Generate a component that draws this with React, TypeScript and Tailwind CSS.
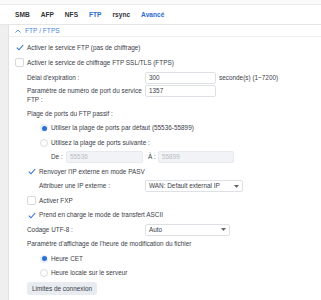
import React from "react";

const font = { fontFamily: '"Liberation Sans", Arial, sans-serif' };

function Check({ checked }: { checked: boolean }) {
  return (
    <span
      className={
        "w-[9px] h-[9px] rounded-[2px] flex items-center justify-center shrink-0 " +
        (checked ? "" : "border border-[#d5d9df] bg-white")
      }
    >
      {checked && (
        <svg width="8" height="7" viewBox="0 0 8 7">
          <path d="M0.8 3.6 L3 5.8 L7.2 1" fill="none" stroke="#2f6fd3" strokeWidth="1.1" />
        </svg>
      )}
    </span>
  );
}

function Radio({ on }: { on: boolean }) {
  return on ? (
    <span className="w-[8px] h-[8px] rounded-full bg-[#e6eefa] flex items-center justify-center shrink-0">
      <span className="w-[5px] h-[5px] rounded-full bg-[#2f6fd3]" />
    </span>
  ) : (
    <span className="w-[8px] h-[8px] rounded-full border border-[#d8dce2] bg-white shrink-0" />
  );
}

function Caret() {
  return (
    <svg width="5" height="3" viewBox="0 0 5 3">
      <path d="M0 0 L5 0 L2.5 3 Z" fill="#666" />
    </svg>
  );
}

export default function App() {
  const tabs = ["SMB", "AFP", "NFS", "FTP", "rsync", "Avancé"];
  return (
    <div className="w-[321px] h-[300px] bg-white overflow-hidden text-[6.4px] text-[#3b4048]" style={font}>
      <div className="h-[5px] bg-[#fafafa] border-b border-[#ebebeb]" />
      <div className="h-[20px] flex items-center gap-[11px] pl-[15px] border-b border-[#e6e6e6] font-bold text-[6.6px]">
        {tabs.map((t) => (
          <span key={t} className={t === "FTP" || t === "Avancé" ? "text-[#2a6bd0]" : "text-[#333]"}>
            {t}
          </span>
        ))}
      </div>
      <div className="flex h-[275px]">
        <div className="w-[9px] bg-[#efefef] border-r border-[#e2e2e2]" />
        <div className="flex-1 flex flex-col">
          <div className="h-[12px] flex items-center gap-[4px] pl-[6px] border-b border-[#efefef] text-[#4a84d6] text-[6.6px]">
            <svg width="6" height="4" viewBox="0 0 6 4">
              <path d="M0.5 3.5 L3 1 L5.5 3.5" fill="none" stroke="#4a84d6" strokeWidth="0.9" />
            </svg>
            <span>FTP / FTPS</span>
          </div>
          <div className="pt-[3px] pl-[6px] flex flex-col">
            <div className="h-[15px] flex items-center gap-[3px]">
              <Check checked />
              <span>Activer le service FTP (pas de chiffrage)</span>
            </div>
            <div className="h-[15px] flex items-center gap-[3px]">
              <Check checked={false} />
              <span>Activer le service de chiffrage FTP SSL/TLS (FTPS)</span>
            </div>
            <div className="h-[15px] flex items-center pl-[12px]">
              <span className="w-[118px]">Délai d'expiration :</span>
              <div className="w-[71px] h-[12px] border border-[#dde1e6] rounded-[2px] px-[3px] flex items-center">300</div>
              <span className="ml-[3px]">seconde(s) (1~7200)</span>
            </div>
            <div className="h-[21.5px] flex items-start pl-[12px]">
              <span className="w-[118px] leading-[9px] pt-[0.5px]">Paramètre de numéro de port du service FTP :</span>
              <div className="w-[71px] h-[12px] border border-[#dde1e6] rounded-[2px] px-[3px] flex items-center">1357</div>
            </div>
            <div className="h-[14.5px] flex items-center pl-[12px]">Plage de ports du FTP passif :</div>
            <div className="h-[14.5px] flex items-center gap-[3px] pl-[25px]">
              <Radio on />
              <span>Utiliser la plage de ports par défaut (55536-55899)</span>
            </div>
            <div className="h-[14.5px] flex items-center gap-[3px] pl-[25px]">
              <Radio on={false} />
              <span>Utilisez la plage de ports suivante :</span>
            </div>
            <div className="h-[14.5px] flex items-center pl-[36px]">
              <span className="w-[15px]">De :</span>
              <div className="w-[77px] h-[12px] bg-[#f1f3f7] border border-[#e6e9ee] rounded-[2px] px-[3px] flex items-center text-[#b8bdc5]">55536</div>
              <span className="ml-[5px] w-[10px]">À :</span>
              <div className="w-[76px] h-[12px] bg-[#f1f3f7] border border-[#e6e9ee] rounded-[2px] px-[3px] flex items-center text-[#b8bdc5]">55899</div>
            </div>
            <div className="h-[14.5px] flex items-center gap-[3px] pl-[12px]">
              <Check checked />
              <span>Renvoyer l'IP externe en mode PASV</span>
            </div>
            <div className="h-[14.5px] flex items-center pl-[24px]">
              <span className="w-[106px]">Attribuer une IP externe :</span>
              <div className="w-[98px] h-[12px] border border-[#dde1e6] rounded-[2px] px-[3px] flex items-center justify-between">
                <span>WAN: Default external IP</span>
                <Caret />
              </div>
            </div>
            <div className="h-[14.5px] flex items-center gap-[3px] pl-[12px]">
              <Check checked={false} />
              <span>Activer FXP</span>
            </div>
            <div className="h-[14.5px] flex items-center gap-[3px] pl-[12px]">
              <Check checked />
              <span>Prend en charge le mode de transfert ASCII</span>
            </div>
            <div className="h-[14.5px] flex items-center pl-[12px]">
              <span className="w-[118px]">Codage UTF-8 :</span>
              <div className="w-[85px] h-[12px] border border-[#dde1e6] rounded-[2px] px-[3px] flex items-center justify-between">
                <span>Auto</span>
                <Caret />
              </div>
            </div>
            <div className="h-[14.5px] flex items-center pl-[12px]">Paramètre d'affichage de l'heure de modification du fichier</div>
            <div className="h-[14.5px] flex items-center gap-[3px] pl-[25px]">
              <Radio on />
              <span>Heure CET</span>
            </div>
            <div className="h-[14.5px] flex items-center gap-[3px] pl-[25px]">
              <Radio on={false} />
              <span>Heure locale sur le serveur</span>
            </div>
            <div className="pl-[12px] mt-[1.5px]">
              <button className="w-[70px] h-[13px] bg-[#e8ebef] rounded-[3px] text-[#3b4048] text-[6.4px]" style={font}>
                Limites de connexion
              </button>
            </div>
          </div>
        </div>
      </div>
    </div>
  );
}
